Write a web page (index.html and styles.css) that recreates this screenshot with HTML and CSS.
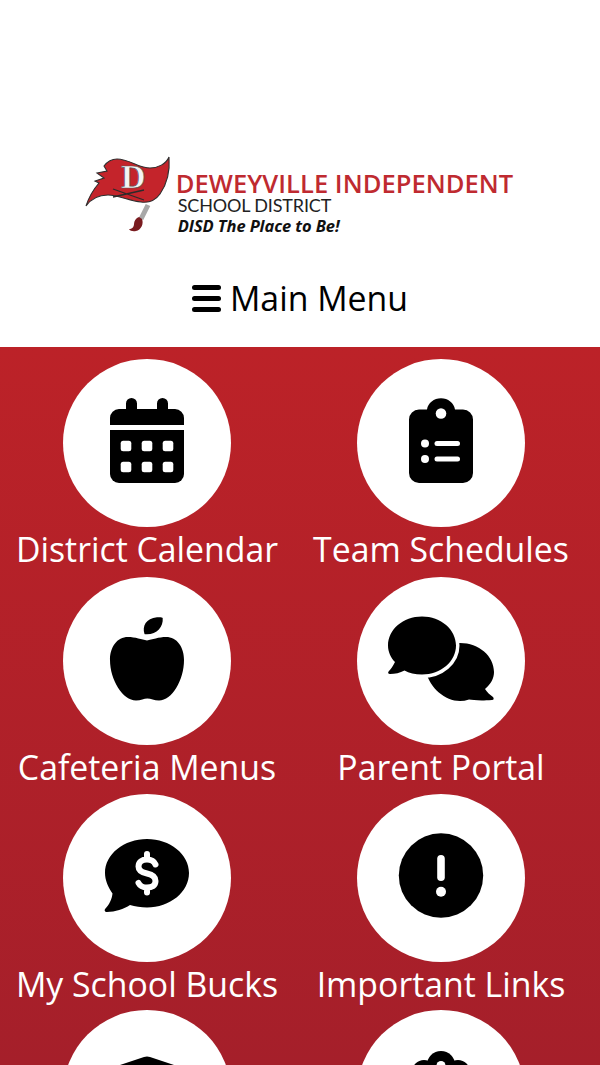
FILE: index.html
```html
<!DOCTYPE html>
<html lang="en">
<head>
    <meta charset="UTF-8">
    <meta name="viewport" content="width=device-width, initial-scale=1.0">
    <title>Deweyville ISD</title>
    <link rel="stylesheet" href="styles.css">
</head>
<body>
    <header class="site-header">
        <div class="logo">
            <svg class="logo-flag" viewBox="0 0 90 80" aria-hidden="true">
                <path class="flag-red" d="M3 53 C6 44 9 38 16 30 L12 28 L21 25 L14 20 L24 18 L21 13 C24 9 29 6 34 6 C46 6 56 15 67 15 C75 15 83 11 86 4 C87 17 84 31 77 41 C72 48 66 50 58 49 C47 48 35 42 25 42 C15 42 8 46 3 53 Z"/>
                <text class="flag-letter" x="38" y="35">D</text>
                <path class="flag-swords" d="M30 36 L61 47 M30 44 L61 37"/>
                <path class="sword-blade" d="M65 52 L58 66"/>
                <path class="sword-hilt" d="M59 66 C61 71 58 77 53 78 C50 78.500 47 78 46 76 C49 76 51 74 51 71 C51 68 53 65 56 64 Z"/>
            </svg>
            <div class="logo-text">
                <div class="logo-name">DEWEYVILLE INDEPENDENT</div>
                <div class="logo-sub">SCHOOL DISTRICT</div>
                <div class="logo-tag">DISD The Place to Be!</div>
            </div>
        </div>
        <h1 class="menu-title">
            <span class="bars"><i></i><i></i><i></i></span>
            Main Menu
        </h1>
    </header>

    <main class="menu">
        <a class="tile" href="#">
            <span class="tile-circle">
                <svg class="icon" viewBox="0 0 100 100" aria-hidden="true">
                    <path d="M29 16 V10.5 a5.5 5.5 0 0 1 11 0 V16 H60 V10.5 a5.5 5.5 0 0 1 11 0 V16 H78 a9 9 0 0 1 9 9 V32 H13 V25 a9 9 0 0 1 9 -9 Z"/>
                    <path d="M13 37 H87 V81 a9 9 0 0 1 -9 9 H22 a9 9 0 0 1 -9 -9 Z"/>
                    <g class="cut">
                        <rect x="23.7" y="47.7" width="10.6" height="10.6" rx="2.5"/>
                        <rect x="44.7" y="47.7" width="10.6" height="10.6" rx="2.5"/>
                        <rect x="65.7" y="47.7" width="10.6" height="10.6" rx="2.5"/>
                        <rect x="23.7" y="68.7" width="10.6" height="10.6" rx="2.5"/>
                        <rect x="44.7" y="68.7" width="10.6" height="10.6" rx="2.5"/>
                        <rect x="65.7" y="68.7" width="10.6" height="10.6" rx="2.5"/>
                    </g>
                </svg>
            </span>
            <span class="tile-label">District Calendar</span>
        </a>
        <a class="tile" href="#">
            <span class="tile-circle">
                <svg class="icon" viewBox="0 0 100 100" aria-hidden="true">
                    <path d="M36 16.5 C37 10 43 5.3 50 5.3 C57 5.3 63 10 64 16.5 H72 a10 10 0 0 1 10 10 V80 a10 10 0 0 1 -10 10 H28 a10 10 0 0 1 -10 -10 V26.5 a10 10 0 0 1 10 -10 Z"/>
                    <g class="cut">
                        <circle cx="50" cy="20.5" r="5.3"/>
                        <circle cx="34" cy="50.5" r="4"/>
                        <circle cx="34" cy="66" r="4"/>
                        <rect x="43.5" y="48" width="25.5" height="5" rx="2.5"/>
                        <rect x="43.5" y="63.5" width="25.5" height="5" rx="2.5"/>
                    </g>
                </svg>
            </span>
            <span class="tile-label">Team Schedules</span>
        </a>
        <a class="tile" href="#">
            <span class="tile-circle">
                <svg class="icon" viewBox="0 0 100 100" aria-hidden="true">
                    <path d="M47.5 23 C45 15 49 7.5 60 6.3 C63 6 65.5 6.3 65.7 7 C66.5 16 60 23 50 23.3 C49 23.3 47.8 23.5 47.5 23 Z"/>
                    <path d="M50 29.5 C45 28.5 38 26 31 26 C20 26 13 36 13 49 C13 69 26 89.5 39 89.5 C44 89.5 47 87.5 50.3 87.5 C54 87.5 57 89.5 62 89.5 C75 89.5 87 69 87 49 C87 36 80 26 69 26 C62 26 55 28.5 50 29.5 Z"/>
                </svg>
            </span>
            <span class="tile-label">Cafeteria Menus</span>
        </a>
        <a class="tile" href="#">
            <span class="tile-circle">
                <svg class="icon" viewBox="0 0 100 100" aria-hidden="true">
                    <path d="M35 61 C39 77 54 90 69 90 C72 90 75 89.5 78 88.5 C82 89 88 90 101 89 C103 89 103 87 102 86 C99 84 96 81 94 78 C100 73 103 67 103 61 C103 45 88 32 69 32 C52 32 38 45 35 61 Z"/>
                    <path class="chat-front" d="M31 5.5 C12 5.5 -3 18.5 -3 34.5 C-3 41 0 47 4 51 C2 55 0 58 -2 60 C-3.5 61.5 -3 63 -1 63 C4 63 9 62 13.5 59.5 C18 62 24 63.5 31 63.5 C50 63.5 65 50.5 65 34.5 C65 18.5 50 5.5 31 5.5 Z"/>
                </svg>
            </span>
            <span class="tile-label">Parent Portal</span>
        </a>
        <a class="tile" href="#">
            <span class="tile-circle">
                <svg class="icon" viewBox="0 0 100 100" aria-hidden="true">
                    <path d="M50 11 C73 11 92 26 92 45 C92 64 73 79.5 50 79.5 C44 79.5 38 78.5 33 77 C27 81 18 84 10 84 C7.5 84 7 82 8.5 80.5 C12 77 15 71 15.5 65.5 C11 59 8 52 8 45 C8 26 27 11 50 11 Z"/>
                    <path class="dollar" d="M58.5 36.5 C57 33 54 31.5 50 31.5 C45 31.5 41.5 34 41.5 38.5 C41.5 43 45 44.5 50 45.5 C55 46.5 58.5 48.5 58.5 53 C58.5 57.5 55 59.5 50 59.5 C46 59.5 43 58 41.5 55 M50 26 V31.5 M50 59.5 V64.5"/>
                </svg>
            </span>
            <span class="tile-label">My School Bucks</span>
        </a>
        <a class="tile" href="#">
            <span class="tile-circle">
                <svg class="icon" viewBox="0 0 100 100" aria-hidden="true">
                    <circle cx="50" cy="47.5" r="42.2"/>
                    <g class="cut">
                        <rect x="46.2" y="27" width="7.6" height="26" rx="3.8"/>
                        <circle cx="50" cy="63.7" r="5"/>
                    </g>
                </svg>
            </span>
            <span class="tile-label">Important Links</span>
        </a>
        <a class="tile tile-last" href="#">
            <span class="tile-circle">
                <svg class="icon" viewBox="0 0 100 100" aria-hidden="true">
                    <path d="M47 13 a8 8 0 0 1 6 0 L98 28 L50 45 L2 28 Z"/>
                </svg>
            </span>
        </a>
        <a class="tile tile-last" href="#">
            <span class="tile-circle">
                <svg class="icon" viewBox="0 0 100 100" aria-hidden="true">
                    <circle cx="50" cy="21" r="14"/>
                    <circle cx="33" cy="28" r="12"/>
                    <circle cx="67" cy="28" r="12"/>
                    <rect x="33" y="24" width="34" height="20"/>
                    <circle class="cut" cx="50" cy="21.5" r="4.5"/>
                </svg>
            </span>
        </a>
    </main>
</body>
</html>
```

FILE: styles.css
```css
* {
    margin: 0;
    padding: 0;
    box-sizing: border-box;
    font-family: 'Open Sans', 'Noto Sans', sans-serif;
}

html, body {
    height: 100%;
    overflow: hidden;
}

body {
    background-color: #ffffff;
    color: #000000;
    display: flex;
    flex-direction: column;
}

.site-header {
    flex: none;
    height: 347px;
    padding-top: 153px;
}

.logo {
    display: flex;
    justify-content: center;
    align-items: flex-start;
    height: 84px;
    padding-right: 4px;
}

.logo-flag {
    width: 90px;
    height: 80px;
    flex: none;
    margin-right: 3px;
}

.flag-red {
    fill: #c4242b;
    stroke: #2e2e2e;
    stroke-width: 1.1;
}

.flag-letter {
    font-family: 'Liberation Serif', serif;
    font-size: 34px;
    font-weight: 700;
    fill: #f4f4f4;
    stroke: #5a5a5a;
    stroke-width: 0.7px;
}

.flag-swords {
    fill: none;
    stroke: #2b2b2b;
    stroke-width: 1.3;
}

.sword-blade {
    fill: none;
    stroke: #a8a8a8;
    stroke-width: 5;
}

.sword-hilt {
    fill: #7a1c20;
}

.logo-text {
    padding-top: 16px;
}

.logo-name {
    color: #bf2a30;
    font-size: 25.5px;
    font-weight: 600;
    line-height: 29px;
    letter-spacing: 0.05px;
    white-space: nowrap;
}

.logo-sub {
    color: #222222;
    font-family: 'Lato', sans-serif;
    font-size: 18px;
    line-height: 14px;
    letter-spacing: -0.15px;
    margin-left: 2px;
}

.logo-tag {
    color: #111111;
    font-size: 16.5px;
    font-weight: 700;
    font-style: italic;
    line-height: 27px;
    letter-spacing: -0.1px;
    margin-left: 2px;
    white-space: nowrap;
}

.menu-title {
    display: flex;
    justify-content: center;
    align-items: center;
    gap: 9px;
    margin-top: 39px;
    font-size: 33.8px;
    font-weight: 400;
    line-height: 44px;
}

.bars {
    display: flex;
    flex-direction: column;
    gap: 6px;
    width: 29px;
}

.bars i {
    display: block;
    height: 5px;
    border-radius: 3px;
    background-color: #000000;
}

.menu {
    flex: 1;
    min-height: 0;
    display: grid;
    grid-template-columns: 294px 294px;
    grid-auto-rows: 217.5px;
    padding-top: 12px;
    background: linear-gradient(#bc2228, #a51f2a);
}

.tile {
    display: flex;
    flex-direction: column;
    align-items: center;
    color: #ffffff;
    text-decoration: none;
}

.tile-last {
    margin-top: -2px;
}

.tile-circle {
    display: flex;
    justify-content: center;
    align-items: center;
    flex: none;
    width: 168px;
    height: 168px;
    border-radius: 50%;
    background-color: #ffffff;
}

.icon {
    width: 100px;
    height: 100px;
    overflow: visible;
    fill: #000000;
}

.icon .cut {
    fill: #ffffff;
}

.chat-front {
    stroke: #ffffff;
    stroke-width: 7;
    paint-order: stroke;
}

.dollar {
    fill: none;
    stroke: #ffffff;
    stroke-width: 6;
    stroke-linecap: round;
}

.tile-label {
    font-size: 33.8px;
    line-height: 44px;
    white-space: nowrap;
}
```
